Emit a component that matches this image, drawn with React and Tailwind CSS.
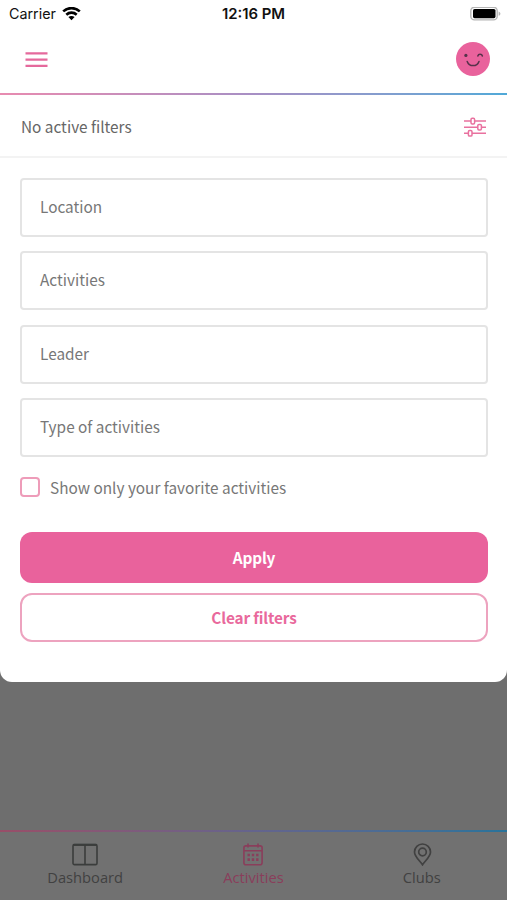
import React, { useState } from "react";

const fields = ["Location", "Activities", "Leader", "Type of activities"];

function StatusBar() {
  return (
    <div className="grid h-[28px] grid-cols-3 items-center font-['Inter',sans-serif] text-[#111]">
      <div className="flex items-center gap-[6px] pl-[9px]">
        <span className="text-[14.3px] leading-[28px]">Carrier</span>
        <svg width="19" height="15" viewBox="0 0 19 15" fill="none" stroke="#000" strokeWidth="2.6">
          <path d="M1.2 4.4C5.9 0 13.1 0 17.8 4.4" />
          <path d="M4.3 7.7C7.3 4.9 11.7 4.9 14.7 7.7" />
          <path d="M9.5 13.3 6.4 10.1C8.2 8.5 10.8 8.5 12.6 10.1Z" fill="#000" stroke="none" />
        </svg>
      </div>
      <div className="text-center text-[14.9px] font-semibold leading-[28px]">12:16 PM</div>
      <div className="flex justify-end pr-[6px]">
        <svg width="31" height="15" viewBox="0 0 31 15">
          <rect x=".8" y=".3" width="26.4" height="12.6" rx="3.6" fill="#fff" stroke="#b5b5b5" strokeWidth="1.4" />
          <rect x="3" y="2" width="22.5" height="9.2" rx="1.6" fill="#000" />
          <path d="M28.6 4.4c2.4.8 2.4 3.6 0 4.4z" fill="#b5b5b5" />
        </svg>
      </div>
    </div>
  );
}

function Header() {
  return (
    <div className="flex h-[65px] items-start justify-between pl-[25px] pr-[17px] pt-[14px]">
      <button type="button" className="mt-[10px]">
        <svg width="23" height="16" viewBox="0 0 23 16" stroke="#e5699c" strokeWidth="2.2">
          <path d="M.5 1.4h22M.5 7.7h22M.5 13.9h22" />
        </svg>
      </button>
      <svg width="34" height="34" viewBox="0 0 34 34" fill="none">
        <circle cx="17" cy="17" r="17" fill="#e9629c" />
        <circle cx="9.9" cy="13.4" r="1.6" fill="#56324a" />
        <path d="M21.8 14c.6-2.4 4-2.4 4.6 0M11.2 19.4c2 5.6 9.800 5.600 11.800 0" stroke="#56324a" strokeWidth="1.5" strokeLinecap="round" />
      </svg>
    </div>
  );
}

function SlidersIcon() {
  return (
    <svg width="22" height="20" viewBox="0 0 22 20" fill="none" stroke="#e9719f" strokeWidth="1.5">
      <path d="M0 4.100h7M10.600 4.100H22M0 10.200h13.800M17.400 10.200H22M0 16.300h4.400M8 16.300h14" />
      <rect x="7" y="1.300" width="3.600" height="5.600" rx="1.200" />
      <rect x="13.800" y="7.400" width="3.600" height="5.600" rx="1.200" />
      <rect x="4.400" y="13.500" width="3.600" height="5.600" rx="1.200" />
    </svg>
  );
}

function TabBar() {
  return (
    <nav className="font-['Open_Sans',sans-serif]">
      <div className="h-[2px] bg-linear-to-r from-[#984e68] via-[#64648d] to-[#27739b]" />
      <div className="grid h-[68px] grid-cols-3 bg-[#717171] px-[1px] pt-[11px] text-[14.7px] leading-[20px] text-[#414141]">
        <div className="flex flex-col items-center gap-px">
          <svg width="26" height="23" viewBox="0 0 26 23" fill="none" stroke="#3b3d3c" strokeWidth="1.6">
            <rect x="1" y="1.6" width="24" height="20" rx="1.4" />
            <path d="M13 2v19.5" />
            <path d="M1.2 1.9h23.6" strokeWidth="2" />
          </svg>
          <span>Dashboard</span>
        </div>
        <div className="flex flex-col items-center gap-px text-[#8a3e5b]">
          <svg width="20" height="23" viewBox="0 0 20 23" fill="none" stroke="currentColor" strokeWidth="1.6">
            <rect x=".9" y="2.9" width="18.2" height="18.9" rx="2" />
            <path d="M1 7.7h18M5 .4v4M15 .4v4" />
            <path d="M4.5 12h2.4M8.8 12h2.4M13.1 12h2.4M4.5 16.6h2.4M8.8 16.6h2.4M13.1 16.6h2.4" strokeWidth="2.6" />
          </svg>
          <span>Activities</span>
        </div>
        <div className="flex flex-col items-center gap-px">
          <svg width="20" height="23" viewBox="0 0 20 23" fill="none" stroke="#414141" strokeWidth="1.7">
            <path d="M10.500 21.800C8.100 18 2.500 13.800 2.500 9a8 8 0 0 1 16 0c0 4.800-5.600 9-8 12.800Z" />
            <circle cx="10.500" cy="9" r="3.800" />
          </svg>
          <span>Clubs</span>
        </div>
      </div>
    </nav>
  );
}

export default function App() {
  const [favorites, setFavorites] = useState(false);

  return (
    <div className="flex h-[900px] w-[507px] flex-col overflow-hidden bg-[#6e6e6e]">
      <div className="h-[681.5px] rounded-b-[12px] bg-white font-['Noto_Sans_CJK_JP',sans-serif] text-[15.35px] text-[#777]">
        <StatusBar />
        <Header />
        <div className="h-[2px] bg-linear-to-r from-[#e88bb0] via-[#a78fc4] to-[#4fa9d8]" />

        <div className="flex h-[63px] items-center justify-between border-b-2 border-[#f3f3f3] pl-[21px] pr-[21px] pt-[3px]">
          <span className="text-[#666]">No active filters</span>
          <SlidersIcon />
        </div>

        <form className="pl-[20px] pr-[19px] pt-[20px]" onSubmit={(e) => e.preventDefault()}>
          <div className="flex flex-col gap-[14.4px]">
            {fields.map((name) => (
              <div key={name} className="flex h-[59px] items-center rounded-[4px] border-2 border-[#e4e4e4] pb-[2px] pl-[18px]">
                {name}
              </div>
            ))}
          </div>

          <label className="mt-[20px] flex h-[20px] items-center gap-[10px]">
            <input
              type="checkbox"
              checked={favorites}
              onChange={(e) => setFavorites(e.target.checked)}
              className="size-[20px] appearance-none rounded-[4px] border-2 border-[#ee9cb9] checked:bg-[#e9629c]"
            />
            <span>Show only your favorite activities</span>
          </label>

          <button type="submit" className="mt-[35px] flex h-[51px] w-full items-center justify-center rounded-[12px] bg-[#e9629c] font-bold tracking-[-0.15px] text-white">
            Apply
          </button>
          <button type="button" onClick={() => setFavorites(false)} className="mt-[10px] flex h-[49px] w-full items-center justify-center rounded-[12px] border-2 border-[#eda3bf] font-bold tracking-[-0.15px] text-[#e9699c]">
            Clear filters
          </button>
        </form>
      </div>

      <div className="flex-1" />
      <TabBar />
    </div>
  );
}
